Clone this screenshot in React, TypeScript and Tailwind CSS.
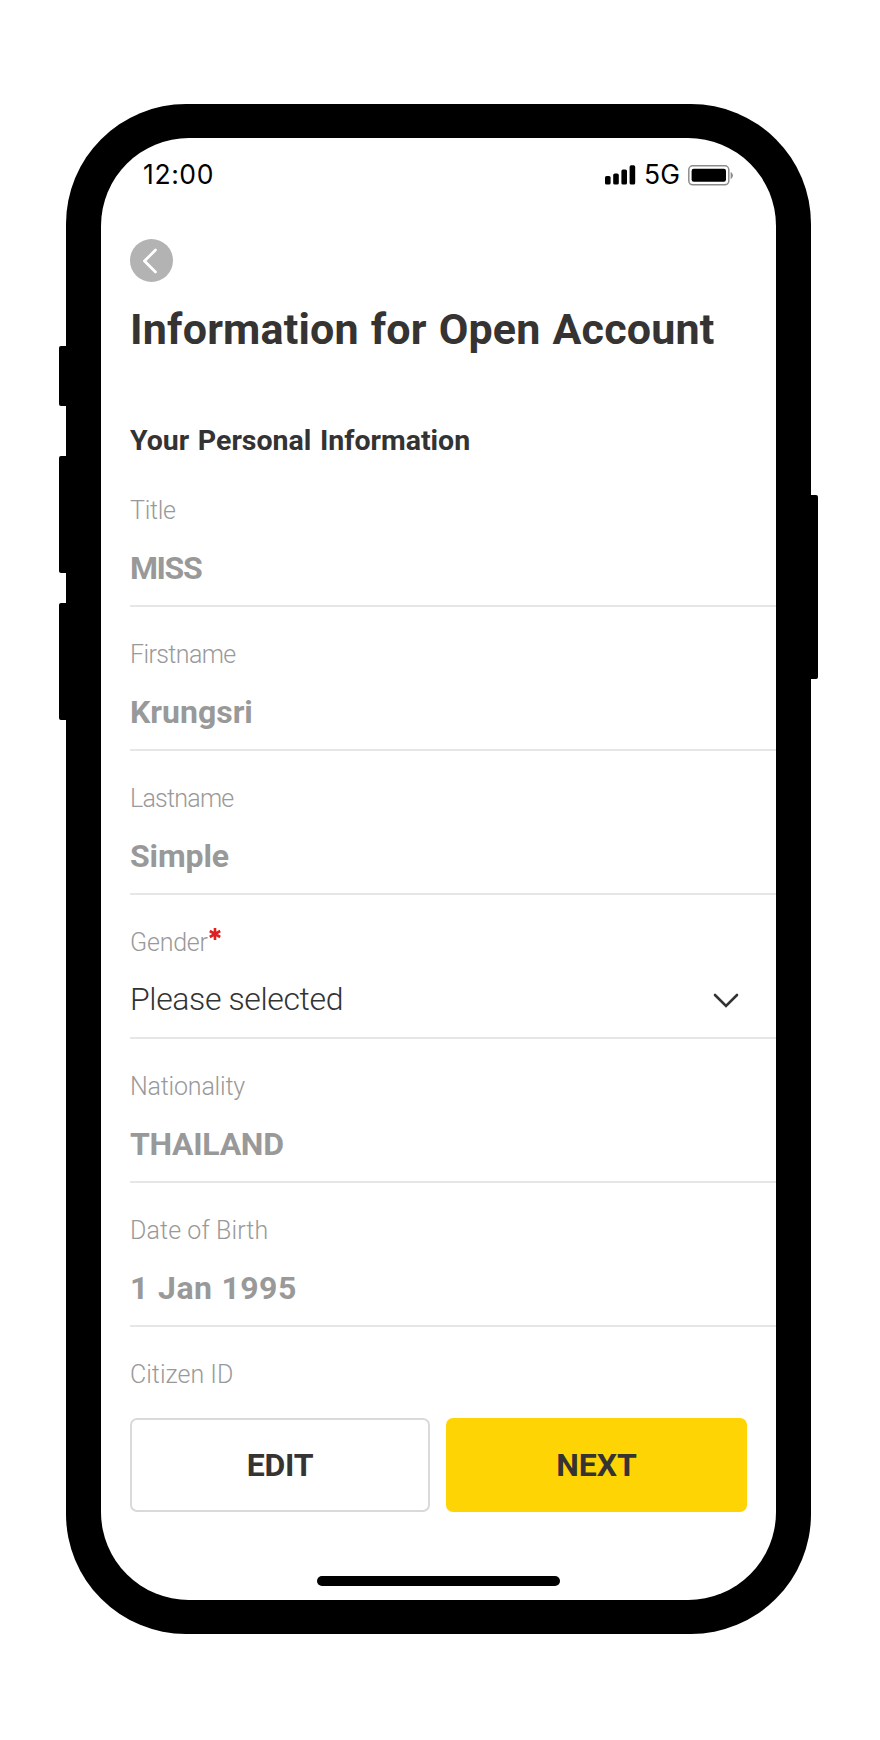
import React from 'react';

interface FieldProps {
  label: string;
  labelClass?: string;
  value: string;
  valueClass: string;
  required?: boolean;
  dropdown?: boolean;
}

const fields: FieldProps[] = [
  { label: 'Title', labelClass: 'tracking-[-0.3px]', value: 'MISS', valueClass: 'font-bold text-[#999] tracking-[-1.4px]' },
  { label: 'Firstname', labelClass: 'tracking-[-0.6px]', value: 'Krungsri', valueClass: 'font-bold text-[#999]' },
  { label: 'Lastname', labelClass: 'tracking-[-0.75px]', value: 'Simple', valueClass: 'font-bold text-[#999] tracking-[-0.1px]' },
  { label: 'Gender', labelClass: 'tracking-[-0.2px]', value: 'Please selected', valueClass: 'font-light text-[#333] tracking-[-0.38px] -mt-[3px]', required: true, dropdown: true },
  { label: 'Nationality', labelClass: 'tracking-[-0.2px]', value: 'THAILAND', valueClass: 'font-bold text-[#999] tracking-[-0.3px]' },
  { label: 'Date of Birth', labelClass: 'tracking-[0.1px]', value: '1 Jan 1995', valueClass: 'font-bold text-[#999] tracking-[0.4px] [word-spacing:1px]' },
];

function StatusBar() {
  return (
    <div className="flex h-[74px] items-center justify-between pl-[42px] pr-[42px] font-['Inter',sans-serif] text-[26.5px] text-black">
      <span className="tracking-[0.6px]">12:00</span>
      <div className="flex items-center">
        <svg width="31" height="20" viewBox="0 0 31 20" fill="#000">
          <rect x="0" y="11" width="5.6" height="8.6" rx="1.6" />
          <rect x="8.2" y="8.4" width="5.6" height="11.2" rx="1.6" />
          <rect x="16.4" y="4.4" width="5.6" height="15.2" rx="1.6" />
          <rect x="24.6" y="0.3" width="5.6" height="19.3" rx="1.6" />
        </svg>
        <span className="ml-[8px]">5G</span>
        <svg className="ml-[8px]" width="46" height="21" viewBox="0 0 46 21">
          <rect x="0.8" y="0.8" width="40" height="19" rx="4" fill="none" stroke="#8c8c8c" strokeWidth="1.5" />
          <rect x="3.6" y="3.8" width="34.4" height="13" rx="2.2" fill="#000" />
          <path d="M42.6 7v7c1.4-.6 2.3-2 2.3-3.5s-.9-2.9-2.3-3.5z" fill="#8c8c8c" />
        </svg>
      </div>
    </div>
  );
}

function Field({ label, labelClass, value, valueClass, required, dropdown }: FieldProps) {
  return (
    <div className="h-[144px] border-b-2 border-[#e6e6e6] pt-[32px]">
      <div className="flex h-[32px] items-center text-[25px] font-light text-[#999]">
        <span className={labelClass}>{label}</span>
        {required && (
          <svg className="-mt-[19px] ml-px" width="12" height="12" viewBox="0 0 12 12" stroke="#e02020" strokeWidth="2.6">
            <path d="M6 0v12M.8 3l10.4 6M11.2 3L.8 9" />
          </svg>
        )}
      </div>
      <div className="mt-[21px] flex h-[40px] items-center justify-between pr-[37px] text-[32px]">
        <span className={valueClass}>{value}</span>
        {dropdown && (
          <svg width="26" height="15" viewBox="0 0 26 15" fill="none" stroke="#333" strokeWidth="2.6" strokeLinecap="round">
            <path d="M2 2l11 11L24 2" />
          </svg>
        )}
      </div>
    </div>
  );
}

export default function App() {
  return (
    <div className="flex h-[1740px] w-[880px] items-start bg-white pt-[104px] pl-[59px] font-['Roboto',sans-serif]">
      {/* Left side keys */}
      <div className="flex w-[7px] flex-col pt-[242px]">
        <div className="h-[60px] rounded-l-xs bg-black" />
        <div className="mt-[50px] h-[117px] rounded-l-xs bg-black" />
        <div className="mt-[30px] h-[117px] rounded-l-xs bg-black" />
      </div>

      {/* Phone body */}
      <div className="h-[1530px] w-[745px] rounded-[120px] bg-black px-[35px] py-[34px]">
        <div className="flex h-[1462px] flex-col overflow-hidden rounded-[88px] bg-white">
          <StatusBar />

          <div className="flex-1 overflow-hidden pl-[29px] pt-[27px]">
            <button className="flex size-[43px] items-center justify-center rounded-full bg-[#b3b3b3] pr-[3px]">
              <svg width="14" height="26" viewBox="0 0 14 26" fill="none" stroke="#fff" strokeWidth="2.7" strokeLinecap="round">
                <path d="M12.5 2L1.5 13L12.5 24" />
              </svg>
            </button>
            <h1 className="mt-[21px] text-[43px] leading-[52px] font-bold tracking-[0.2px] text-[#363333] [word-spacing:1px]">
              Information for Open Account
            </h1>
            <h2 className="mt-[69px] text-[28.5px] leading-[34px] font-bold text-[#333] [word-spacing:1.5px]">
              Your Personal Information
            </h2>
            <div className="pt-[5px]">
              {fields.map((field) => (
                <Field key={field.label} {...field} />
              ))}
            </div>
            <div className="pt-[32px] text-[25px] leading-[32px] font-light text-[#999]">Citizen ID</div>
          </div>

          {/* Actions */}
          <div className="flex h-[158px] shrink-0 items-start gap-4 pl-[29px] pr-[29px] text-[32px] font-bold text-[#363333]">
            <button className="h-[94px] w-[300px] rounded-[7px] border-2 border-[#dadada] tracking-[-0.3px]">EDIT</button>
            <button className="h-[94px] flex-1 rounded-[7px] bg-[#ffd404]">NEXT</button>
          </div>
          <div className="mb-[14px] ml-[216px] h-[10px] w-[243px] shrink-0 rounded-full bg-black" />
        </div>
      </div>

      {/* Power key */}
      <div className="mt-[391px] h-[184px] w-[7px] rounded-r-xs bg-black" />
    </div>
  );
}
